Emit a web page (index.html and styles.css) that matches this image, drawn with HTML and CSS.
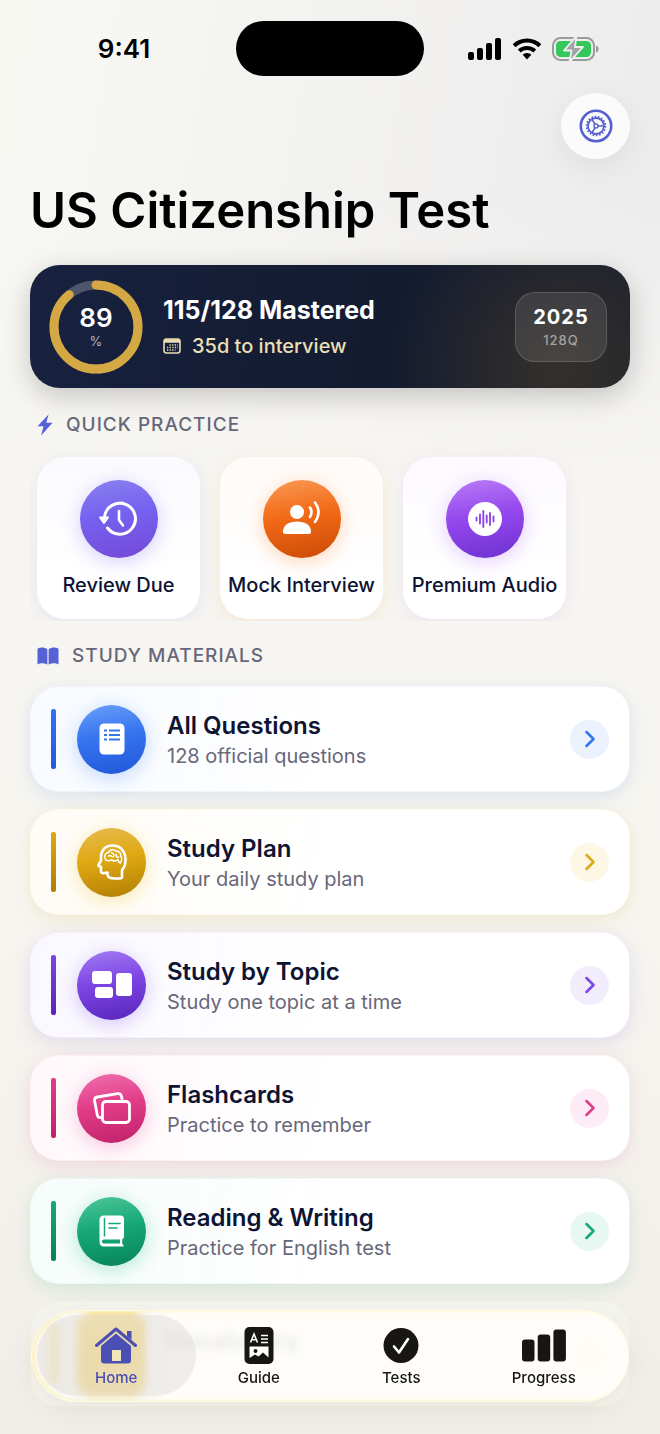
FILE: index.html
```
<!DOCTYPE html>
<html lang="en">
<head>
  <meta charset="UTF-8">
  <meta name="viewport" content="width=device-width, initial-scale=1.0">
  <title>US Citizenship Test</title>
  <link rel="stylesheet" href="styles.css">
</head>
<body>

<!-- Status bar -->
<div class="status-bar">
  <div class="time">9:41</div>
  <div class="island"></div>
  <div class="status-icons">
    <svg width="34" height="22" viewBox="0 0 34 22">
      <rect x="0" y="14" width="6" height="8" rx="2"/>
      <rect x="9" y="10" width="6" height="12" rx="2"/>
      <rect x="18" y="5" width="6" height="17" rx="2"/>
      <rect x="27" y="0" width="6" height="22" rx="2"/>
    </svg>
    <svg width="30" height="22" viewBox="0 0 30 22">
      <path d="M15 0.5C9.300 0.500 4.300 2.700 0.700 6.200L3.600 9.200A16.200 16.200 0 0 1 26.400 9.200L29.300 6.200C25.700 2.700 20.700 0.500 15 0.500Z"/>
      <path d="M15 8C11.500 8 8.200 9.400 5.800 11.600L8.700 14.500A9.200 9.200 0 0 1 21.300 14.500L24.200 11.600C21.800 9.400 18.500 8 15 8Z"/>
      <path d="M15 15C13.300 15 11.800 15.700 10.700 16.800L15 21.500L19.300 16.800C18.200 15.700 16.700 15 15 15Z"/>
    </svg>
    <svg width="47" height="24" viewBox="0 0 47 24">
      <rect x="1" y="1" width="41" height="22" rx="7.500" fill="none" stroke="#9b9b9d" stroke-width="2"/>
      <path d="M44 8.500C47.500 9.500 47.500 14.500 44 15.500Z" fill="#9b9b9d"/>
      <rect x="4" y="4" width="35" height="16" rx="4.500" fill="#34c759"/>
      <path d="M24.500 -1L12 13.500H19.500L17.500 25L31 10H23Z" fill="#a3a3a6" stroke="#f0f0f1" stroke-width="1.800" stroke-linejoin="round"/>
    </svg>
  </div>
</div>

<main class="page">
  <header class="page-header">
    <button type="button" class="settings-btn" aria-label="Settings">
      <svg width="34" height="34" viewBox="0 0 34 34" fill="none" stroke="#5460cf">
        <circle cx="17" cy="17" r="15.200" stroke-width="2.600"/>
        <circle cx="17" cy="17" r="8" stroke-width="1.800"/>
        <circle cx="17" cy="17" r="9.400" stroke-width="1.800" stroke-dasharray="1.640 1.640"/>
        <circle cx="17" cy="17" r="2" stroke-width="1.400"/>
        <path d="M19 17H25M16 15.300L13 10.100M16 18.700L13 23.900" stroke-width="1.600"/>
      </svg>
    </button>
    <h1>US Citizenship Test</h1>
  </header>

  <!-- Progress summary -->
  <section class="hero">
    <div class="ring">
      <svg width="94" height="94" viewBox="0 0 94 94" fill="none">
        <circle cx="47" cy="47" r="42" stroke="#4e5669" stroke-width="9"/>
        <circle cx="47" cy="47" r="42" stroke="#d4a843" stroke-width="9" stroke-linecap="round" pathLength="100" stroke-dasharray="89 100" transform="rotate(-90 47 47)"/>
      </svg>
      <div class="ring-label"><strong>89</strong><span>%</span></div>
    </div>
    <div class="hero-text">
      <h2>115/128 Mastered</h2>
      <p>
        <svg width="18" height="16" viewBox="0 0 18 16" fill="none">
          <rect x="1" y="1" width="16" height="14" rx="2.500" stroke="#eadfb4" stroke-width="1.600"/>
          <path d="M1 3H17" stroke="#eadfb4" stroke-width="3.500"/>
          <path d="M6.500 7H15M4 9.500H15M4 12H12.500" stroke="#eadfb4" stroke-width="1.300" stroke-dasharray="1.300 1.300"/>
        </svg>
        35d to interview
      </p>
    </div>
    <div class="version"><strong>2025</strong><span>128Q</span></div>
  </section>

  <h3 class="section-title">
    <svg width="16" height="22" viewBox="0 0 16 22"><path d="M11.500 0.500L0.500 12.300H6.500L4.200 21.500L15.500 8.700H9.300Z"/></svg>
    QUICK PRACTICE
  </h3>
  <div class="quick-row">
    <button type="button" class="quick-card indigo">
      <span class="icon">
        <svg width="42" height="36" viewBox="0 0 42 36" fill="none" stroke="#fff" stroke-linecap="round" stroke-linejoin="round">
          <path d="M6.500 16A15.500 15.500 0 1 1 9.500 27" stroke-width="3"/>
          <path d="M2 16.500H10L6 22Z" fill="#fff" stroke-width="2"/>
          <path d="M21 10V19L25 24.500" stroke-width="2.600"/>
        </svg>
      </span>
      Review Due
    </button>
    <button type="button" class="quick-card orange">
      <span class="icon">
        <svg width="38" height="36" viewBox="0 0 38 36" fill="#fff">
          <circle cx="14" cy="11" r="7"/>
          <path d="M0 30.500C0 24 6 20.500 14 20.500S28 24 28 30.500C28 32.300 27.300 33 25.500 33H2.500C0.700 33 0 32.300 0 30.500Z"/>
          <path d="M27 6.500Q30 11 27 16M32 1.500Q39 11 32 21" fill="none" stroke="#fff" stroke-width="2.600" stroke-linecap="round"/>
        </svg>
      </span>
      Mock Interview
    </button>
    <button type="button" class="quick-card violet">
      <span class="icon">
        <svg width="34" height="34" viewBox="0 0 34 34">
          <circle cx="17" cy="17" r="17" fill="#fff"/>
          <path d="M8.500 15.500V18.500M12 12.500V21.500M15.300 9V25M18.700 13.500V20.500M22 11V23M25.500 14.500V19.500" stroke="#9044e8" stroke-width="1.900" stroke-linecap="round"/>
        </svg>
      </span>
      Premium Audio
    </button>
  </div>

  <h3 class="section-title">
    <svg width="22" height="18" viewBox="0 0 22 18"><path d="M10.400 2.500C8 0.300 3.300 0 0.500 1.700V17.500C3.300 15.800 7.800 15.900 10.400 17.800ZM11.600 2.500C14 0.300 18.700 0 21.500 1.700V17.500C18.700 15.800 14.200 15.900 11.600 17.800Z"/></svg>
    STUDY MATERIALS
  </h3>
  <div class="materials">
    <a href="#questions" class="row blue">
      <span class="accent"></span>
      <span class="icon">
        <svg width="26" height="32" viewBox="0 0 26 32">
          <rect x="0.500" y="0.500" width="25" height="31" rx="4.500" fill="#fff"/>
          <g stroke="#3674f0" stroke-width="2"><path d="M5 7.500H8M5 12H8M5 16.500H8"/><path d="M10 7.500H21M10 12H21M10 16.500H21"/></g>
        </svg>
      </span>
      <span class="row-text"><strong>All Questions</strong><span>128 official questions</span></span>
      <span class="chevron"><svg width="10" height="18" viewBox="0 0 10 18"><path d="M1.500 2L8.500 9L1.500 16"/></svg></span>
    </a>
    <a href="#plan" class="row gold">
      <span class="accent"></span>
      <span class="icon">
        <svg width="30" height="36" viewBox="0 0 30 36" fill="none" stroke="#fff" stroke-linecap="round" stroke-linejoin="round">
          <path d="M25 33V26C27.500 23.500 28.500 20 28.500 15.500C28.500 7 23 1.500 15.500 1.500C8 1.500 4 6.500 4 13V16.500L1.500 21C1.200 21.700 1.500 22 2.200 22.200L4 22.700V27C4 29 5.500 29.500 7.500 29L10.500 28.500V30.500C10.500 33.500 13 34.500 18 34.500C21.500 34.500 25 35 25 33Z" stroke-width="2.600"/>
          <path d="M8.500 15.500C6.500 12 8.500 8.500 11.500 8.500C12.500 5 18 5 19 7.500C22 6.500 24.500 9.500 23.500 12C25.500 14 24.500 17 23.500 19C22 18.500 21 17 21 15.500C18 18 14.500 16 14.500 16C12.500 17 9.500 17 8.500 15.500ZM11.500 12C13 11 14.500 12 15 13M14.500 8.500C16 9.500 18 11 16.500 12.500M19.500 10.500C18.500 12 19.500 14 21.500 13" stroke-width="1.500"/>
        </svg>
      </span>
      <span class="row-text"><strong>Study Plan</strong><span>Your daily study plan</span></span>
      <span class="chevron"><svg width="10" height="18" viewBox="0 0 10 18"><path d="M1.500 2L8.500 9L1.500 16"/></svg></span>
    </a>
    <a href="#topics" class="row purple">
      <span class="accent"></span>
      <span class="icon">
        <svg width="40" height="28" viewBox="0 0 40 28" fill="#fff">
          <rect x="0" y="0" width="20" height="13" rx="3"/>
          <rect x="3" y="16" width="18" height="11" rx="3"/>
          <rect x="24" y="2" width="16" height="23" rx="3"/>
        </svg>
      </span>
      <span class="row-text"><strong>Study by Topic</strong><span>Study one topic at a time</span></span>
      <span class="chevron"><svg width="10" height="18" viewBox="0 0 10 18"><path d="M1.500 2L8.500 9L1.500 16"/></svg></span>
    </a>
    <a href="#flashcards" class="row pink">
      <span class="accent"></span>
      <span class="icon">
        <svg width="38" height="32" viewBox="0 0 38 32" fill="none" stroke="#fff" stroke-width="2.800" stroke-linejoin="round" stroke-linecap="round">
          <rect x="9.500" y="9.500" width="27" height="21" rx="3.500"/>
          <path d="M29 7L28.500 4.500C28 2 27 1.300 24.500 1.700L4.500 5C2 5.400 1.200 6.500 1.600 9L4.300 23C4.700 25 5.500 25.800 7.500 25.500"/>
        </svg>
      </span>
      <span class="row-text"><strong>Flashcards</strong><span>Practice to remember</span></span>
      <span class="chevron"><svg width="10" height="18" viewBox="0 0 10 18"><path d="M1.500 2L8.500 9L1.500 16"/></svg></span>
    </a>
    <a href="#reading" class="row green">
      <span class="accent"></span>
      <span class="icon">
        <svg width="26" height="32" viewBox="0 0 26 32">
          <path d="M5 0.500H21C24 0.500 25 1.500 25 4.500V21C25 22.700 24.500 23.800 23.200 24.300V28.500L25 31.500H5C2 31.500 0.500 29.500 0.500 27V5C0.500 2 2 0.500 5 0.500Z" fill="#fff"/>
          <path d="M5.500 3V21.500" stroke="#16a876" stroke-width="1.500"/>
          <path d="M10 8.500H21M10 13H18" stroke="#16a876" stroke-width="1.600" stroke-linecap="round"/>
          <path d="M5 24.500H21V28.500H5C2.300 28.500 2.300 24.500 5 24.500Z" fill="#10a270"/>
        </svg>
      </span>
      <span class="row-text"><strong>Reading &amp; Writing</strong><span>Practice for English test</span></span>
      <span class="chevron"><svg width="10" height="18" viewBox="0 0 10 18"><path d="M1.500 2L8.500 9L1.500 16"/></svg></span>
    </a>
    <a href="#vocabulary" class="row amber">
      <span class="accent"></span>
      <span class="icon"></span>
      <span class="row-text"><strong>Vocabulary</strong><span>&nbsp;</span></span>
      <span class="chevron"></span>
    </a>
  </div>
</main>

<!-- Floating tab bar -->
<nav class="tab-bar">
  <a href="#home" class="tab active">
    <svg width="42" height="37" viewBox="0 0 42 37">
      <path d="M1.500 18.500L21 2L40.500 18.500" fill="none" stroke="#4a4fb3" stroke-width="3" stroke-linecap="round" stroke-linejoin="round"/>
      <path d="M32 4H36.500V13L32 9.300Z" fill="#4a4fb3"/>
      <path d="M21 6.500L6 19V33C6 35.500 7 36.500 9.500 36.500H32.500C35 36.500 36 35.500 36 33V19Z" fill="#4a4fb3"/>
      <rect x="17" y="23" width="9" height="11" fill="#f2e3b8"/>
    </svg>
    Home
  </a>
  <a href="#guide" class="tab">
    <svg width="30" height="37" viewBox="0 0 30 37">
      <rect x="0.500" y="0" width="29" height="37" rx="5" fill="#171613"/>
      <path d="M6.500 15.500L10 7L13.500 15.500M7.800 12.700H12.200M17 8.500H24M17 12H24M17 15.500H24" fill="none" stroke="#fff" stroke-width="1.600"/>
      <path d="M5.500 19.500H24.500V30.500L19 25.500L14.500 29.500L11 27.500L5.500 31Z" fill="#fff"/>
      <circle cx="11.500" cy="24" r="2" fill="#171613"/>
    </svg>
    Guide
  </a>
  <a href="#tests" class="tab">
    <svg width="36" height="37" viewBox="0 0 36 37">
      <circle cx="18" cy="18.500" r="17.500" fill="#171613"/>
      <path d="M11 19.500L16 25.500L25 12" fill="none" stroke="#fff" stroke-width="2.600" stroke-linecap="round" stroke-linejoin="round"/>
    </svg>
    Tests
  </a>
  <a href="#progress" class="tab">
    <svg width="44" height="37" viewBox="0 0 44 37" fill="#171613">
      <rect x="0" y="12.500" width="12.500" height="22" rx="3"/>
      <rect x="15.700" y="7.500" width="12.500" height="27" rx="3"/>
      <rect x="31.400" y="2.500" width="12.500" height="32" rx="3"/>
    </svg>
    Progress
  </a>
</nav>

</body>
</html>
```
FILE: styles.css
```
* {
  margin: 0;
  padding: 0;
  box-sizing: border-box;
}

body {
  font-family: Inter, "Liberation Sans", sans-serif;
  min-height: 100vh;
  color: #0e1433;
  background:
    linear-gradient(to bottom, rgba(246, 245, 240, 0) 200px, #f6f5f1 480px, #f6f5f0 900px, #f1eee8 100%),
    linear-gradient(100deg, #f8f8f3 0%, #f1f0ef 50%, #e9e9ec 100%);
}

a {
  color: inherit;
  text-decoration: none;
}

button {
  border: none;
  font-family: inherit;
  color: inherit;
  cursor: pointer;
}

svg {
  display: block;
  flex-shrink: 0;
}

/* Status bar */
.status-bar {
  display: grid;
  grid-template-columns: 1fr 188px 1fr;
  align-items: center;
  padding-top: 21px;
  color: #000;
}

.time {
  padding-left: 12px;
  text-align: center;
  font-size: 26px;
  font-weight: 600;
}

.island {
  height: 55px;
  border-radius: 28px;
  background: #000;
}

.status-icons {
  display: flex;
  align-items: center;
  justify-content: center;
  gap: 10px;
  padding-right: 18px;
}

/* Page */
.page {
  padding: 17px 30px 26px;
}

.page-header {
  display: flex;
  flex-direction: column;
}

.settings-btn {
  align-self: flex-end;
  display: flex;
  align-items: center;
  justify-content: center;
  width: 69px;
  height: 66px;
  border-radius: 50%;
  background: #fbfbfc;
  box-shadow: 0 8px 32px rgba(0, 0, 0, 0.07);
}

.page-header h1 {
  margin: 22px 0 24px;
  font-size: 49px;
  line-height: 60px;
  font-weight: 600;
  color: #000;
}

/* Progress card */
.hero {
  display: flex;
  align-items: center;
  height: 123px;
  padding: 0 23px 0 19px;
  border-radius: 30px;
  background:
    radial-gradient(circle at 88% 80%, rgba(62, 54, 42, 0.75), rgba(62, 54, 42, 0) 170px),
    linear-gradient(100deg, #18213f 0%, #131b30 60%, #1a1f2e 100%);
  box-shadow: 0 8px 28px rgba(0, 0, 0, 0.2);
  color: #fff;
}

.ring {
  display: grid;
  place-items: center;
}

.ring > * {
  grid-area: 1 / 1;
}

.ring-label {
  display: flex;
  flex-direction: column;
  align-items: center;
}

.ring-label strong {
  font-size: 26px;
  line-height: 28px;
  font-weight: 600;
}

.ring-label span {
  font-size: 13px;
  line-height: 18px;
  color: #b3b6c2;
}

.hero-text {
  flex: 1;
  padding: 2px 0 0 20px;
}

.hero-text h2 {
  font-size: 25px;
  line-height: 36px;
  font-weight: 700;
}

.hero-text p {
  display: flex;
  align-items: center;
  gap: 11px;
  font-size: 20px;
  line-height: 36px;
  font-weight: 500;
  color: #eadfb4;
}

.version {
  display: flex;
  flex-direction: column;
  align-items: center;
  justify-content: center;
  width: 92px;
  height: 70px;
  border: 1px solid rgba(255, 255, 255, 0.15);
  border-radius: 20px;
  background: rgba(255, 255, 255, 0.1);
}

.version strong {
  font-size: 20px;
  line-height: 26px;
  font-weight: 700;
  letter-spacing: 1px;
}

.version span {
  font-size: 13px;
  line-height: 20px;
  font-weight: 500;
  letter-spacing: 1px;
  color: #a3a3a3;
}

/* Section titles */
.section-title {
  display: flex;
  align-items: center;
  gap: 13px;
  padding-left: 7px;
  font-size: 19px;
  line-height: 24px;
  font-weight: 500;
  letter-spacing: 1px;
  color: #686779;
}

.section-title svg {
  fill: #5661d6;
}

.hero + .section-title {
  margin-top: 25px;
}

/* Colours shared by cards and rows */
.indigo { --light: #8a80ee; --main: #7561f0; --dark: #7549d6; --glow: 117, 97, 240; }
.orange { --light: #fa9a55; --main: #f26a17; --dark: #cb4a05; --glow: 249, 115, 22; }
.violet { --light: #b97df5; --main: #9548ee; --dark: #6d31d0; --glow: 168, 85, 247; }
.blue { --light: #69a0f8; --main: #3674f0; --dark: #2158d8; --glow: 59, 130, 246; }
.gold { --light: #e7bb50; --main: #dfa912; --dark: #b17d04; --glow: 234, 179, 8; }
.purple { --light: #a27cf3; --main: #7d45e4; --dark: #5925bc; --glow: 124, 77, 240; }
.pink { --light: #f06fae; --main: #e23c88; --dark: #c0216a; --glow: 236, 72, 153; }
.green { --light: #4fc69b; --main: #16a876; --dark: #078358; --glow: 16, 185, 129; }
.amber { --light: #f2d060; --main: #f0c63c; --dark: #ecc450; --glow: 234, 179, 8; }

.icon {
  display: flex;
  align-items: center;
  justify-content: center;
  flex-shrink: 0;
  border-radius: 50%;
  background: linear-gradient(170deg, var(--light), var(--main) 45%, var(--dark));
  box-shadow: 0 4px 20px rgba(var(--glow), 0.3);
}

/* Quick practice */
.quick-row {
  display: flex;
  gap: 20px;
  margin-bottom: 23px;
  padding: 20px 7px 2px;
  overflow: hidden;
}

.quick-card {
  display: flex;
  flex-direction: column;
  align-items: center;
  gap: 15px;
  width: 163px;
  height: 162px;
  padding-top: 23px;
  border-radius: 28px;
  background: linear-gradient(rgba(var(--glow), 0.03), rgba(var(--glow), 0) 70%), #fff;
  box-shadow: 0 4px 16px rgba(var(--glow), 0.1);
  font-size: 20px;
  line-height: 24px;
  font-weight: 500;
  white-space: nowrap;
}

.quick-card .icon {
  width: 78px;
  height: 78px;
}

/* Study materials */
.materials {
  display: flex;
  flex-direction: column;
  gap: 17px;
  margin-top: 18px;
}

.row {
  display: flex;
  align-items: center;
  height: 106px;
  padding: 0 20px;
  border: 1px solid rgba(var(--glow), 0.06);
  border-radius: 28px;
  background: linear-gradient(100deg, rgba(var(--glow), 0.04), rgba(var(--glow), 0) 50%), #fff;
  box-shadow: 0 6px 20px rgba(var(--glow), 0.1), 0 2px 14px rgba(0, 0, 0, 0.03);
}

.accent {
  width: 5px;
  height: 60px;
  margin-right: 21px;
  border-radius: 2px;
  background: linear-gradient(var(--main), var(--dark));
}

.row .icon {
  width: 69px;
  height: 69px;
  margin-right: 21px;
}

.row-text {
  display: flex;
  flex: 1;
  flex-direction: column;
  padding-top: 2px;
}

.row-text strong {
  font-size: 24px;
  line-height: 32px;
  font-weight: 600;
}

.row-text span {
  font-size: 20px;
  line-height: 28px;
  color: #686779;
}

.chevron {
  display: flex;
  align-items: center;
  justify-content: center;
  width: 39px;
  height: 39px;
  border-radius: 50%;
  background: rgba(var(--glow), 0.1);
}

.chevron path {
  fill: none;
  stroke: var(--main);
  stroke-width: 2.500;
  stroke-linecap: round;
  stroke-linejoin: round;
}

/* Last row sits under the tab bar */
.row.amber {
  background: #f5f5ef;
  box-shadow: none;
}

.row.amber .icon {
  height: 84px;
  border-radius: 16px;
  box-shadow: none;
}

/* Tab bar */
.tab-bar {
  position: fixed;
  left: 31px;
  right: 31px;
  bottom: 32px;
  display: flex;
  height: 92px;
  padding: 0 13px;
  border-radius: 46px;
  border: 1px solid rgba(255, 250, 225, 0.8);
  background: linear-gradient(to right, rgba(255, 254, 249, 0.4) 110px, rgba(255, 254, 249, 0.9) 140px);
  backdrop-filter: blur(4px);
  box-shadow: 0 8px 28px rgba(60, 50, 20, 0.08), inset 2px 0 3px #fdf0ae;
}

.tab {
  position: relative;
  display: flex;
  flex: 1;
  flex-direction: column;
  align-items: center;
  padding-top: 16px;
  font-size: 15px;
  line-height: 27px;
  font-weight: 500;
  color: #171613;
}

.tab.active {
  color: #4a4fb3;
}

.tab.active::before {
  content: "";
  position: absolute;
  z-index: -1;
  inset: 4px -8px 5px;
  border-radius: 41px;
  background: rgba(222, 218, 216, 0.45);
}
```
